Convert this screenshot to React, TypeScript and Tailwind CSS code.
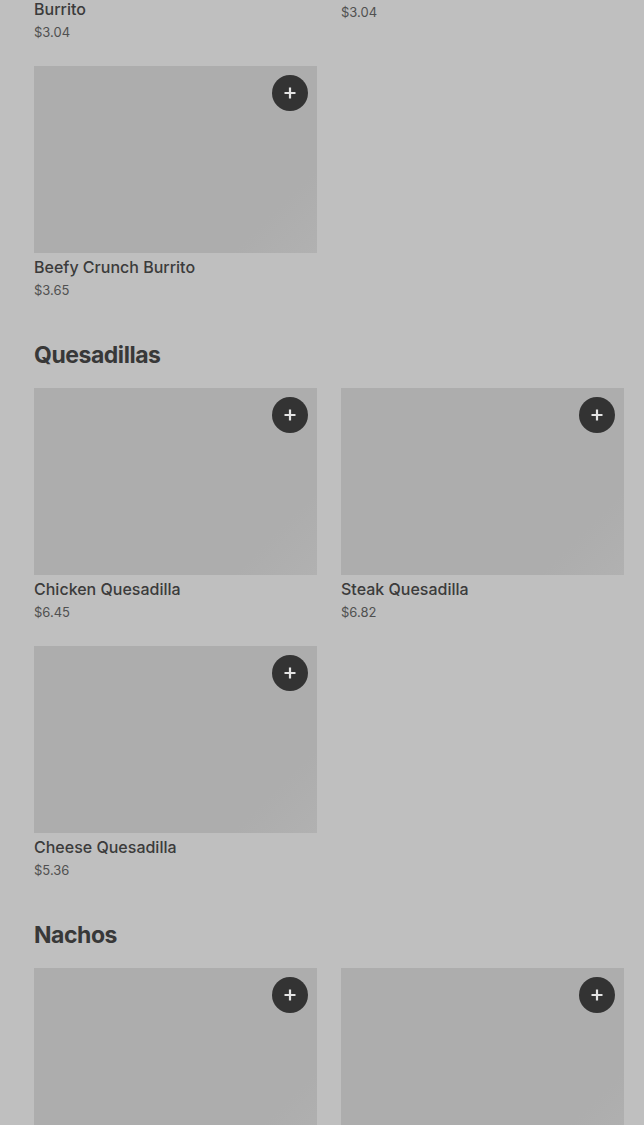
import React from "react";

type Item = { name: React.ReactNode; price: string };
type Section = { title?: string; items: Item[] };

const sections: Section[] = [
  {
    items: [
      { name: <>Chicken Chipotle Grilled Cheese<br />Burrito</>, price: "$3.04" },
      { name: "Beefy 5-Layer Burrito", price: "$3.04" },
      { name: "Beefy Crunch Burrito", price: "$3.65" },
    ],
  },
  {
    title: "Quesadillas",
    items: [
      { name: "Chicken Quesadilla", price: "$6.45" },
      { name: "Steak Quesadilla", price: "$6.82" },
      { name: "Cheese Quesadilla", price: "$5.36" },
    ],
  },
  {
    title: "Nachos",
    items: [
      { name: "Nachos BellGrande", price: "$6.29" },
      { name: "Chips and Nacho Cheese Sauce", price: "$2.49" },
    ],
  },
];

function PlusButton() {
  return (
    <button className="absolute right-[9px] top-[9px] flex h-9 w-9 items-center justify-center rounded-full bg-[#333333]">
      <svg width="12" height="12" viewBox="0 0 12 12" fill="none" stroke="#e4e4e4" strokeWidth="2.2">
        <path d="M6 0.5v11M0.5 6h11" />
      </svg>
    </button>
  );
}

function ItemCard({ item }: { item: Item }) {
  return (
    <div className="flex flex-col">
      <div className="relative h-[187px] w-full bg-[#adadad] bg-[linear-gradient(135deg,#adadad_82%,#b1b1b1_100%)]">
        <PlusButton />
      </div>
      <div className="mt-1 text-[16px] font-medium leading-5 text-[#3b3b3b]">{item.name}</div>
      <div className="mt-[3px] text-[13px] leading-5 text-[#505050]">{item.price}</div>
    </div>
  );
}

export default function App() {
  return (
    <div className="h-[1125px] overflow-hidden bg-[#bfbfbf] font-['Inter',sans-serif]">
      <div className="-mt-[212px] px-[34px]">
        {sections.map((section, i) => (
          <section key={i}>
            {section.title && (
              <h2 className="mb-[17px] mt-[39px] text-[23px] font-bold leading-8 tracking-[-0.02em] text-[#383838]">
                {section.title}
              </h2>
            )}
            <div className="grid w-[590px] grid-cols-2 gap-x-6 gap-y-6">
              {section.items.map((item, j) => (
                <ItemCard key={j} item={item} />
              ))}
            </div>
          </section>
        ))}
      </div>
    </div>
  );
}
